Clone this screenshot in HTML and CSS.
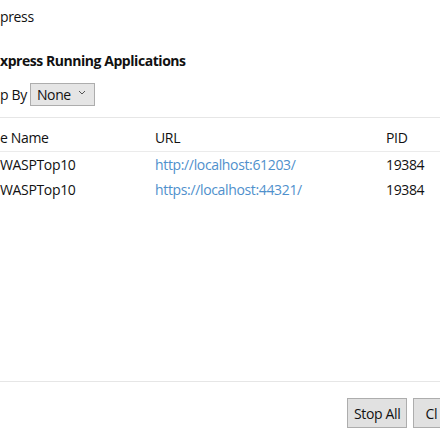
FILE: index.html
```html
<!DOCTYPE html>
<html>
<head>
<meta charset="utf-8">
<link rel="stylesheet" href="styles.css">
</head>
<body>
<div class="dialog">
  <div class="app-title">press</div>
  <div class="heading">xpress Running Applications</div>
  <div class="group-row">
    <span class="group-label">p By</span>
    <span class="select">None<svg class="chev" width="8" height="5" viewBox="0 0 8 5"><path d="M1 1 L4 4 L7 1" fill="none" stroke="#555" stroke-width="1"/></svg></span>
  </div>
  <div class="list">
    <div class="row head">
      <span class="c-name">e Name</span>
      <span class="c-url">URL</span>
      <span class="c-pid">PID</span>
    </div>
    <div class="row">
      <span class="c-name">WASPTop10</span>
      <span class="c-url link">http://localhost:61203/</span>
      <span class="c-pid">19384</span>
    </div>
    <div class="row">
      <span class="c-name">WASPTop10</span>
      <span class="c-url link">https://localhost:44321/</span>
      <span class="c-pid">19384</span>
    </div>
  </div>
  <div class="footer">
    <button class="btn">Stop All</button>
    <button class="btn btn-cut">Cl</button>
  </div>
</div>
</body>
</html>
```
FILE: styles.css
```css
html, body {
  margin: 0;
  padding: 0;
  background: #ffffff;
  overflow: hidden;
}
body {
  width: 440px;
  height: 440px;
  font-family: "Open Sans", "Noto Sans", sans-serif;
  font-size: 14px;
  letter-spacing: -0.35px;
  color: #111111;
}
.dialog {
  display: flex;
  flex-direction: column;
  height: 440px;
}
.app-title {
  height: 20px;
  line-height: 20px;
  margin-top: 7px;
}
.heading {
  font-weight: 700;
  height: 20px;
  line-height: 20px;
  margin-top: 24px;
  letter-spacing: -0.45px;
}
.group-row {
  display: flex;
  align-items: center;
  gap: 3px;
  margin-top: 12px;
  height: 23px;
}
.select {
  display: flex;
  align-items: center;
  box-sizing: border-box;
  width: 65px;
  height: 23px;
  padding: 0 0 0 6px;
  background: #e5e5e5;
  border: 1px solid #adadad;
}
.chev {
  margin-left: auto;
  margin-right: 8px;
  margin-top: -4px;
}
.list {
  margin-top: 11px;
  border-top: 1px solid #e6e6e6;
  flex: 1;
  border-bottom: 1px solid #e6e6e6;
}
.row {
  display: flex;
  height: 25px;
  line-height: 25px;
}
.row.head {
  margin-top: 7px;
  height: 26px;
  border-bottom: 1px solid #ebebeb;
}
.c-name { width: 155px; flex: none; }
.c-url { width: 231px; flex: none; }
.c-pid { flex: 1; }
.link { color: #4f90cc; }
.footer {
  display: flex;
  gap: 6px;
  padding: 16px 0 0 347px;
  height: 58px;
  box-sizing: border-box;
}
.btn {
  flex: none;
  height: 30px;
  min-width: 60px;
  padding: 0 6px;
  font-family: "Open Sans", "Noto Sans", sans-serif;
  font-size: 14px;
  letter-spacing: -0.35px;
  color: #111111;
  background: #e1e1e1;
  border: 1px solid #adadad;
  border-radius: 0;
  white-space: nowrap;
}
.btn-cut {
  min-width: 0;
  width: 28px;
  padding: 0 0 0 11px;
  text-align: left;
}
```
